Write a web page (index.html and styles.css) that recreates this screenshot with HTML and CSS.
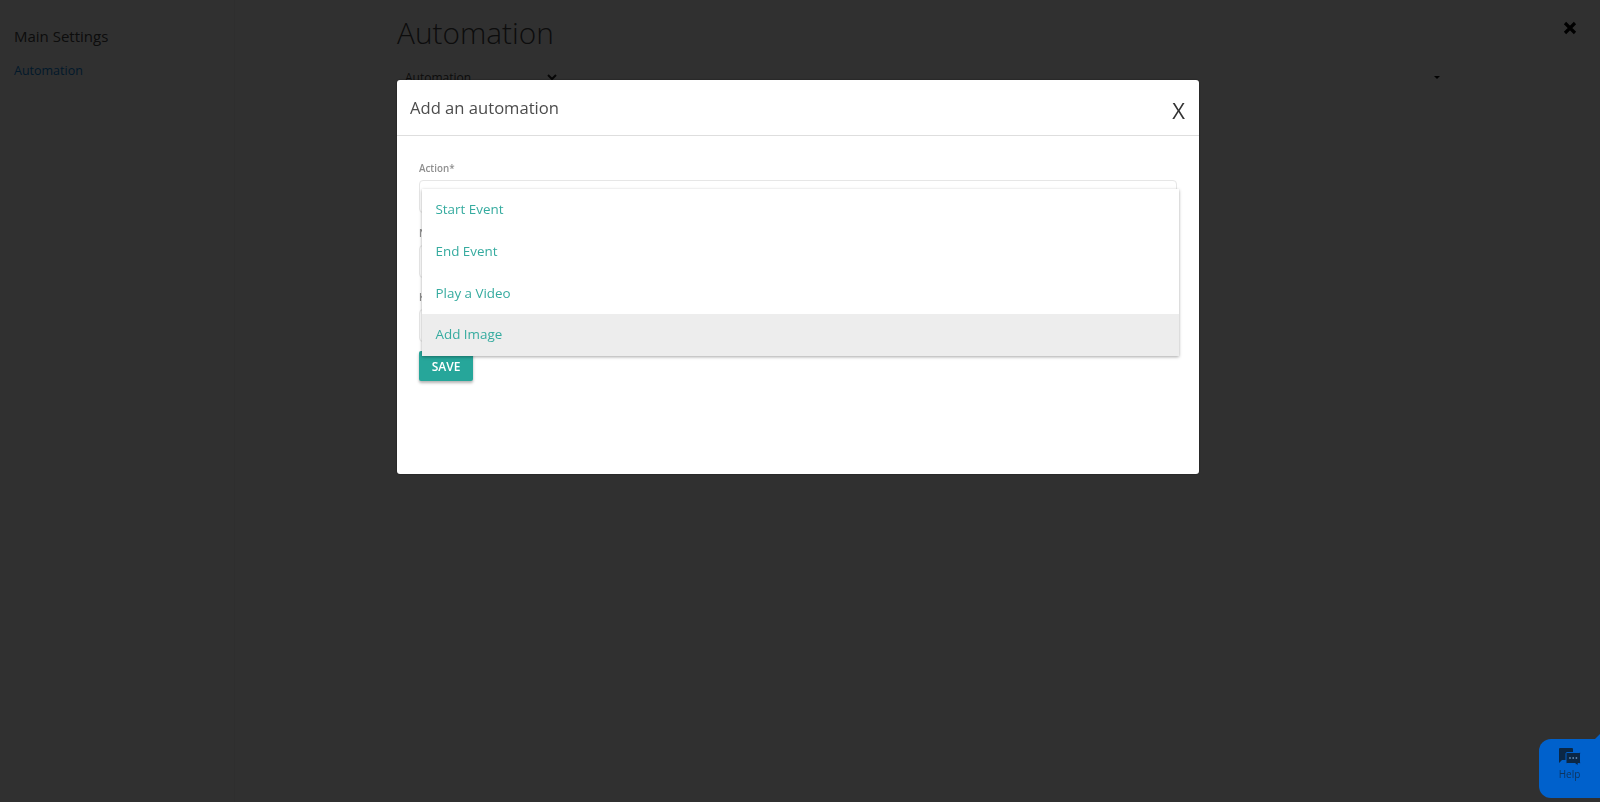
FILE: index.html
```html
<!DOCTYPE html>
<html lang="en">
<head>
<meta charset="utf-8">
<title>Automation</title>
<link rel="stylesheet" href="styles.css">
</head>
<body>
<div class="app">
  <aside class="sidebar">
    <h2 class="side-title">Main Settings</h2>
    <a class="side-link" href="#">Automation</a>
  </aside>
  <main class="main">
    <h1 class="page-title">Automation</h1>
    <div class="filters">
      <div class="fake-select">
        <span>Automation</span>
        <svg class="chev" viewBox="0 0 10 8" width="10" height="8"><path d="M1 2l4 4 4-4" fill="none" stroke="currentColor" stroke-width="2"/></svg>
      </div>
      <span class="caret"></span>
    </div>
  </main>
  <div class="page-close">
    <svg viewBox="0 0 14 14" width="14" height="14"><path d="M2 2l10 10M12 2L2 12" fill="none" stroke="currentColor" stroke-width="3.2"/></svg>
  </div>
</div>

<div class="backdrop">
  <section class="modal">
    <header class="modal-head">
      <h3 class="modal-title">Add an automation</h3>
      <span class="modal-x">X</span>
    </header>
    <div class="modal-body">
      <div class="field field-first">
        <label class="field-label">Action*</label>
        <div class="input input-a"></div>
        <ul class="menu">
          <li class="menu-item">Start Event</li>
          <li class="menu-item">End Event</li>
          <li class="menu-item">Play a Video</li>
          <li class="menu-item is-hover">Add Image</li>
        </ul>
      </div>
      <div class="field">
        <label class="field-label">Name</label>
        <div class="input"></div>
      </div>
      <div class="field">
        <label class="field-label">Key</label>
        <div class="input input-c"></div>
      </div>
      <button class="save" type="button">SAVE</button>
    </div>
  </section>
</div>

<div class="help">
  <span class="help-notch"></span>
  <svg class="help-icon" viewBox="0 0 22 18" width="22" height="18">
    <path d="M1 0h12a1 1 0 0 1 1 1v10a1 1 0 0 1-1 1H3l-3 3V1a1 1 0 0 1 1-1z" fill="#0b2745"/>
    <path d="M8 4.5h12.5a1 1 0 0 1 1 1v9a1 1 0 0 1-1 1H19v2.500l-3-2.500H8a1 1 0 0 1-1-1v-9a1 1 0 0 1 1-1z" fill="#0b2745" stroke="#0061cc" stroke-width="1"/>
    <circle cx="11" cy="10" r="0.9" fill="#5f86ad"/><circle cx="14.200" cy="10" r="0.9" fill="#5f86ad"/><circle cx="17.400" cy="10" r="0.9" fill="#5f86ad"/>
  </svg>
  <span class="help-text">Help</span>
</div>
</body>
</html>
```
FILE: styles.css
```css
* { box-sizing: border-box; }
html, body { height: 100%; }
body {
  margin: 0;
  overflow: hidden;
  background: #fff;
  font-family: "Open Sans", "Noto Sans", sans-serif;
  color: #444;
}
.app { display: flex; height: 802px; }
.sidebar {
  width: 235px;
  flex: none;
  padding: 26px 14px;
  border-right: 1px solid #f4f4f4;
}
.side-title {
  margin: 0 0 16px;
  font-size: 15px;
  line-height: 20px;
  font-weight: 400;
  color: #444;
}
.side-link {
  display: block;
  font-size: 12.5px;
  line-height: 18px;
  color: #0a85e0;
  text-decoration: none;
}
.main { flex: 1; padding: 11px 0 0 162px; }
.page-title {
  margin: 0 0 11px;
  font-size: 29.8px;
  line-height: 44px;
  font-weight: 300;
  color: #444;
}
.filters { display: flex; align-items: center; height: 22px; }
.fake-select {
  width: 165px;
  padding: 0 5px 0 8px;
  display: flex;
  justify-content: space-between;
  align-items: center;
  font-size: 12px;
  color: #444;
}
.chev { color: #222; }
.caret {
  margin-left: 872px;
  width: 0;
  height: 0;
  border: 3.5px solid transparent;
  border-top-color: #111;
  border-bottom: 0;
}
.page-close {
  position: absolute;
  top: 21px;
  left: 1563px;
  color: #000;
  line-height: 0;
}

.backdrop {
  position: fixed;
  inset: 0;
  z-index: 10;
  background: rgba(0, 0, 0, 0.81);
  padding: 80px 0 0 397px;
}
.modal {
  width: 802px;
  height: 394px;
  background: #fff;
  border-radius: 3px;
  box-shadow: 0 0 2px rgba(0, 0, 0, 0.6);
}
.modal-head {
  height: 56px;
  padding: 0 13px;
  display: flex;
  justify-content: space-between;
  border-bottom: 1px solid #dedede;
}
.modal-title {
  margin: 16px 0 0;
  font-size: 16.6px;
  line-height: 24px;
  font-weight: 400;
  color: #4c4c4c;
}
.modal-x {
  margin: 17px 1px 0 0;
  font-size: 22px;
  line-height: 26px;
  font-weight: 400;
  color: #333;
}
.modal-body { padding: 24px 22px 0; }
.field { position: relative; height: 64px; }
.field-first { height: 65px; }
.field-label {
  display: block;
  font-size: 9.8px;
  line-height: 18px;
  font-weight: 600;
  color: #8f8f8f;
  margin-bottom: 2px;
}
.input {
  height: 33px;
  border: 1px solid #e6e6e6;
  border-radius: 4px;
  background: #fff;
}
.menu {
  position: absolute;
  top: 29px;
  left: 3px;
  width: 757px;
  margin: 0;
  padding: 0;
  list-style: none;
  background: #fff;
  box-shadow: 0 1px 3px rgba(0, 0, 0, 0.35);
  z-index: 2;
}
.menu-item {
  height: 41.75px;
  padding: 0 13.5px;
  font-size: 13.4px;
  line-height: 41.75px;
  color: #35ab9f;
}
.is-hover { background: #ededed; }
.save {
  display: block;
  width: 54px;
  height: 30px;
  margin-top: -2px;
  padding: 0;
  border: 0;
  border-radius: 2px;
  background: #26a69a;
  color: #fff;
  font: 600 12px "Open Sans", sans-serif;
  box-shadow: 0 2px 3px rgba(0, 0, 0, 0.3);
}

.help {
  position: fixed;
  z-index: 20;
  left: 1539px;
  top: 739px;
  width: 61px;
  height: 59px;
  background: #0061cc;
  border-radius: 12px 0 0 12px;
  display: flex;
  flex-direction: column;
  align-items: center;
  padding-top: 9px;
}
.help-notch {
  position: absolute;
  top: -5px;
  right: 0;
  border-style: solid;
  border-width: 0 0 5px 5px;
  border-color: transparent transparent #0061cc transparent;
}
.help-icon { display: block; }
.help-text { margin-top: 1px; font-size: 10px; line-height: 14px; color: #0d3560; }
```
